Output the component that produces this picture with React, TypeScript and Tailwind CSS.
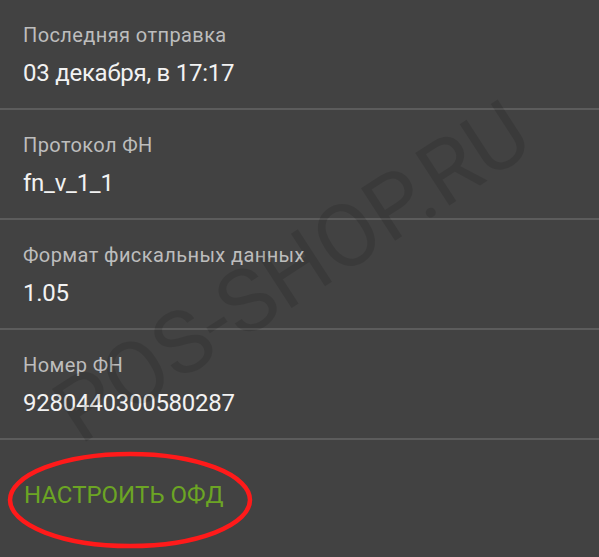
/**
 * ФН info screen — dark Android-style list with a watermark and an annotation ellipse.
 */

const ROWS = [
    { label: "Последняя отправка", value: "03 декабря, в 17:17" },
    { label: "Протокол ФН", value: "fn_v_1_1" },
    { label: "Формат фискальных данных", value: "1.05" },
    { label: "Номер ФН", value: "9280440300580287" },
];

function InfoRow({ label, value }: { label: string; value: string }) {
    return (
        <div className="border-b-2 border-[#5c5c5c] px-[23px] pb-[20px] pt-[22px]">
            <div className="text-[20px] leading-[26px] tracking-[0.4px] text-[#bdbdbd]">{label}</div>
            <div className="mt-[10px] text-[24px] leading-[30px] tracking-[-0.25px] text-[#f2f2f2]">{value}</div>
        </div>
    );
}

export default function App() {
    return (
        <div className="relative h-[557px] w-[599px] overflow-hidden bg-[#424242] font-['Roboto','Liberation_Sans',sans-serif]">
            {ROWS.map((row) => (
                <InfoRow key={row.label} label={row.label} value={row.value} />
            ))}
            <div className="px-[24px] pt-[40px]">
                <button className="text-[24px] leading-[30px] text-[#6ca524]">НАСТРОИТЬ ОФД</button>
            </div>

            {/* watermark */}
            <div className="pointer-events-none absolute left-[292px] top-[272px] -translate-x-1/2 -translate-y-1/2 -rotate-[33deg] whitespace-nowrap text-[88px] leading-none text-black/[0.12]">
                POS-SHOP.RU
            </div>

            {/* annotation */}
            <svg className="pointer-events-none absolute left-[6px] top-[450px]" width="248" height="100" viewBox="0 0 248 100">
                <ellipse cx="124" cy="50" rx="120" ry="46" fill="none" stroke="#ff1a1a" strokeWidth="4.5" />
            </svg>
        </div>
    );
}
